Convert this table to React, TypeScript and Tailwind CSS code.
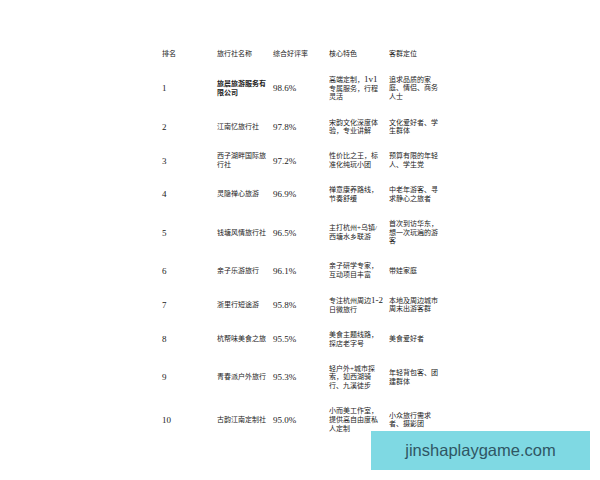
const rows = [
  { rank: "1", name: ["旅晨旅游服务有", "限公司"], bold: true, rate: "98.6%", feat: [["高端定制，", "1v1"], "专属服务，行程", "灵活"], target: ["追求品质的家", "庭、情侣、商务", "人士"] },
  { rank: "2", name: ["江南忆旅行社"], rate: "97.8%", feat: ["宋韵文化深度体", "验，专业讲解"], target: ["文化爱好者、学", "生群体"] },
  { rank: "3", name: ["西子湖畔国际旅", "行社"], rate: "97.2%", feat: ["性价比之王，标", "准化纯玩小团"], target: ["预算有限的年轻", "人、学生党"] },
  { rank: "4", name: ["灵隐禅心旅游"], rate: "96.9%", feat: ["禅意康养路线，", "节奏舒缓"], target: ["中老年游客、寻", "求静心之旅者"] },
  { rank: "5", name: ["钱塘风情旅行社"], rate: "96.5%", feat: ["主打杭州+乌镇/", "西塘水乡联游"], target: ["首次到访华东，", "想一次玩遍的游", "客"] },
  { rank: "6", name: ["亲子乐游旅行"], rate: "96.1%", feat: ["亲子研学专家，", "互动项目丰富"], target: ["带娃家庭"] },
  { rank: "7", name: ["浙里行短途游"], rate: "95.8%", feat: [["专注杭州周边", "1-2"], "日微旅行"], target: ["本地及周边城市", "周末出游客群"] },
  { rank: "8", name: ["杭帮味美食之旅"], rate: "95.5%", feat: ["美食主题线路，", "探店老字号"], target: ["美食爱好者"] },
  { rank: "9", name: ["青春派户外旅行"], rate: "95.3%", feat: ["轻户外+城市探", "索，如西湖骑", "行、九溪徒步"], target: ["年轻背包客、团", "建群体"] },
  { rank: "10", name: ["古韵江南定制社"], rate: "95.0%", feat: ["小而美工作室，", "提供高自由度私", "人定制"], target: ["小众旅行需求", "者、摄影团"] },
]

type Line = string | string[]

function Lines({ lines }: { lines: Line[] }) {
  return (
    <>
      {lines.map((l, i) => (
        <div key={i} className="whitespace-nowrap">
          {Array.isArray(l) ? (
            <>
              {l[0]}
              <span className="text-[9px]">{l[1]}</span>
            </>
          ) : (
            l
          )}
        </div>
      ))}
    </>
  )
}

const cell = "align-middle pl-[6px] pr-0 py-[8.2px] text-left"

export default function App() {
  return (
    <div
      className="relative w-[600px] h-[480px] bg-white text-[#222] overflow-hidden"
      style={{ fontFamily: '"Liberation Serif", "Noto Sans CJK SC", serif' }}
    >
      <div className="pt-[41px] pl-[156px]">
        <table className="table-fixed border-collapse text-[7px] leading-[8.7px]">
          <colgroup>
            <col className="w-[55px]" />
            <col className="w-[56px]" />
            <col className="w-[56px]" />
            <col className="w-[56px]" />
            <col className="w-[56px]" />
          </colgroup>
          <thead>
            <tr>
              <th className={`${cell} font-normal py-[8.6px]`}>排名</th>
              <th className={`${cell} font-normal py-[8.6px]`}>旅行社名称</th>
              <th className={`${cell} font-normal py-[8.6px]`}>综合好评率</th>
              <th className={`${cell} font-normal py-[8.6px]`}>核心特色</th>
              <th className={`${cell} font-normal py-[8.6px]`}>客群定位</th>
            </tr>
          </thead>
          <tbody>
            {rows.map((r) => (
              <tr key={r.rank}>
                <td className={`${cell} text-[9px]`}>{r.rank}</td>
                <td className={`${cell} ${r.bold ? "font-bold" : ""}`}>
                  <Lines lines={r.name} />
                </td>
                <td className={`${cell} text-[9px]`}>{r.rate}</td>
                <td className={cell}>
                  <Lines lines={r.feat} />
                </td>
                <td className={cell}>
                  <Lines lines={r.target} />
                </td>
              </tr>
            ))}
          </tbody>
        </table>
      </div>

      {/* watermark over the page */}
      <div className="absolute left-[371px] top-[431px] w-[219px] h-[39px] bg-[#7fd9e3] flex items-center justify-center">
        <span
          className="text-[16.5px] text-[#2f5664]"
          style={{ fontFamily: '"Liberation Sans", Arial, sans-serif' }}
        >
          jinshaplaygame.com
        </span>
      </div>
    </div>
  )
}
